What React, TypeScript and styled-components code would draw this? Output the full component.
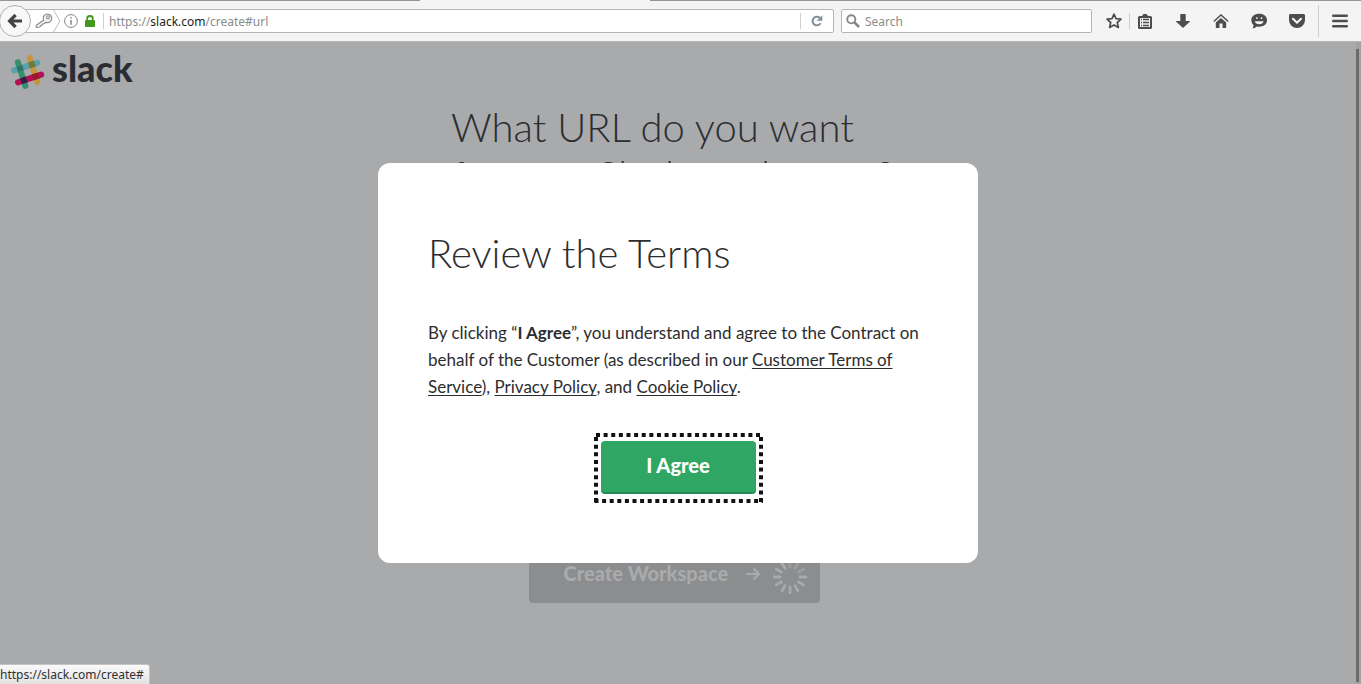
import React from "react";
import styled, { createGlobalStyle } from "styled-components";

const GlobalStyle = createGlobalStyle`
  *, *::before, *::after { box-sizing: border-box; }
  html, body, #root { height: 100%; margin: 0; }
  body { overflow: hidden; background: #a9aaab; color: #2c2d30; font-family: Lato, "Liberation Sans", sans-serif; }
`;

const uiFont = `"Noto Sans", "Open Sans", sans-serif`;

const Window = styled.div`
  display: flex;
  flex-direction: column;
  height: 100vh;
`;

const TabEdge = styled.div`
  display: flex;
  flex: none;
  height: 1px;
  background: #979598;
`;

const ActiveTab = styled.div`
  width: 230px;
  margin-left: 420px;
  background: #f4f4f4;
`;

const Toolbar = styled.header`
  display: flex;
  flex: none;
  align-items: center;
  height: 41px;
  background: #f4f4f4;
  border-bottom: 1px solid #b7b7b8;
  font-family: ${uiFont};
  font-size: 12px;
`;

const IconButton = styled.button<{ $width?: number }>`
  display: flex;
  align-items: center;
  justify-content: center;
  width: ${(p) => p.$width ?? 30}px;
  height: 24px;
  padding: 0;
  border: 0;
  background: none;
  color: #4d4d4d;
`;

const BackButton = styled.button`
  display: flex;
  flex: none;
  align-items: center;
  justify-content: center;
  z-index: 1;
  width: 32px;
  height: 32px;
  margin-left: -1px;
  padding: 0;
  border: 1px solid #b0b0b0;
  border-radius: 50%;
  background: #f8f8f8;
  color: #444;
`;

const AddressBar = styled.form`
  display: flex;
  flex: 1;
  align-items: center;
  height: 24px;
  margin-left: -6px;
  padding-left: 9px;
  border: 1px solid #b5b5b5;
  border-radius: 0 2px 2px 0;
  background: #fff;
`;

const Identity = styled.div`
  display: flex;
  align-items: center;
  height: 22px;
  padding-right: 4px;
`;

const Divider = styled.span<{ $height?: number }>`
  flex: none;
  width: 1px;
  height: ${(p) => p.$height ?? 16}px;
  background: #d0d0d0;
`;

const Address = styled.a`
  flex: 1;
  padding-left: 5px;
  color: #8b8b8b;
  text-decoration: none;
  white-space: nowrap;

  b { color: #1c1c1c; font-weight: 400; }
`;

const SearchBox = styled.label`
  display: flex;
  flex: none;
  align-items: center;
  width: 251px;
  height: 24px;
  margin: 0 7px;
  padding-left: 4px;
  border: 1px solid #b5b5b5;
  border-radius: 2px;
  background: #fff;
`;

const SearchInput = styled.input`
  flex: 1;
  min-width: 0;
  margin-left: 5px;
  padding: 0;
  border: 0;
  outline: 0;
  background: none;
  font: inherit;

  &::placeholder { color: #8b8b8b; opacity: 1; }
`;

const Actions = styled.nav`
  display: flex;
  align-items: center;
`;

const MenuArea = styled.div`
  display: flex;
  align-items: center;
  margin-left: 6px;
`;

const Viewport = styled.div`
  position: relative;
  display: flex;
  flex: 1;
  min-height: 0;
  background: #a9aaab;
`;

const Page = styled.main`
  flex: 1;
  min-width: 0;
  overflow: hidden;
`;

const Scrollbar = styled.div`
  flex: none;
  width: 5px;
  padding: 7px 1px 2px 0;
  background: #a3a3a4;
`;

const ScrollThumb = styled.div`
  width: 3px;
  height: 100%;
  background: #6b6b6c;
`;

const Brand = styled.a`
  display: flex;
  align-items: center;
  gap: 7px;
  width: max-content;
  height: 59px;
  margin-bottom: 2px;
  padding-left: 11px;
  color: #2c2d33;
  font-size: 36px;
  font-weight: 900;
  line-height: 40px;
  text-decoration: none;
`;

const WordMark = styled.span`
  padding-bottom: 8px;
`;

const Setup = styled.section`
  display: flex;
  flex-direction: column;
  align-items: center;
  justify-content: space-between;
  width: 454px;
  height: 500px;
  margin: 0 auto;
`;

const Title = styled.h1`
  margin: 0;
  color: #2c2d30;
  font-size: 40px;
  font-weight: 300;
  line-height: 48px;
`;

const CreateButton = styled.button`
  display: flex;
  align-items: center;
  width: 291px;
  height: 52px;
  margin-right: 8px;
  padding: 0 12px 0 35px;
  border: 0;
  border-radius: 4px;
  background: #8c8d8e;
  color: #a9aaab;
  font: 900 20px/24px Lato, sans-serif;
`;

const CreateLabel = styled.span`
  display: flex;
  flex: 1;
  align-items: center;
  gap: 18px;
  padding-bottom: 8px;
`;

const Overlay = styled.div`
  position: absolute;
  inset: 0 5px 0 0;
  display: flex;
  align-items: center;
  justify-content: center;
`;

const Dialog = styled.div`
  display: flex;
  flex-direction: column;
  align-items: flex-start;
  width: 600px;
  max-width: 100%;
  padding: 66px 50px 61px;
  border-radius: 12px;
  background: #fff;
`;

const DialogTitle = styled.h2`
  margin: 0 0 42px;
  font-size: 40px;
  font-weight: 300;
  line-height: 48px;
`;

const Terms = styled.p`
  margin: 0 0 33px;
  font-size: 17px;
  line-height: 27px;

  a {
    color: inherit;
    text-decoration: underline 1px;
    text-decoration-skip-ink: none;
    text-underline-offset: 2px;
  }
`;

const AgreeButton = styled.button`
  position: relative;
  align-self: center;
  width: 155px;
  height: 53px;
  margin: 8px 0;
  padding: 0 0 4px;
  border: 0;
  border-bottom: 2px solid #258a55;
  border-radius: 4px;
  outline: 0;
  background: #2fa664;
  color: #fff;
  font: 900 20px/24px Lato, sans-serif;
`;

const FocusRing = styled.svg`
  position: absolute;
  top: -8px;
  left: -7px;
`;

const StatusBar = styled.div`
  position: absolute;
  bottom: 0;
  left: 0;
  height: 20px;
  padding-right: 5px;
  border-top: 1px solid #c4c4c4;
  border-right: 1px solid #c4c4c4;
  border-radius: 0 3px 0 0;
  background: linear-gradient(#fafafa, #e2e2e2);
  color: #303030;
  font: 12px/19px ${uiFont};
`;

const BackIcon = () => (
  <svg width="16" height="16" viewBox="0 0 16 16" fill="none" stroke="currentColor" strokeWidth="3.2">
    <path d="M8.6 2 2.6 8l6 6M3 8h12" />
  </svg>
);

const KeyIcon = () => (
  <svg width="18" height="16" viewBox="0 0 18 16" fill="#f1f1ef" stroke="#8a8a8a" strokeWidth="1.1" strokeLinejoin="round">
    <path d="M8.6 7.2A4.3 4.3 0 1 1 12.2 9.6L10.4 9.4 9.4 10.6 7.8 10.8 7.4 12.2 5.9 12.4 4.9 14 1.2 14.4 1.3 12.2Z" />
    <circle cx="13" cy="4.2" r="1.4" fill="#fff" />
  </svg>
);

const Chevron = () => (
  <svg width="8" height="22" viewBox="0 0 8 22" fill="none" stroke="#bcbcbc">
    <path d="M.5 0 7 11 .5 22" />
  </svg>
);

const InfoIcon = () => (
  <svg width="14" height="14" viewBox="0 0 14 14" fill="none" stroke="#858585">
    <circle cx="7" cy="7" r="6.4" />
    <path d="M7 6v4.8M7 3v1.6" strokeWidth="1.5" />
  </svg>
);

const LockIcon = () => (
  <svg width="10" height="12" viewBox="0 0 10 12">
    <path d="M2.2 6V3.4a2.8 2.4 0 0 1 5.6 0V6" fill="none" stroke="#43971f" strokeWidth="1.8" />
    <rect y="5" width="10" height="7" rx="1" fill="#43971f" />
  </svg>
);

const ReloadIcon = () => (
  <svg width="12" height="12" viewBox="0 0 12 12">
    <path d="M9.6 8.2A4.3 4.3 0 1 1 8.8 2.8" fill="none" stroke="#82909a" strokeWidth="2.1" />
    <path d="M11.3.2V5.8H5.6Z" fill="#82909a" />
  </svg>
);

const SearchIcon = () => (
  <svg width="14" height="14" viewBox="0 0 14 14" fill="none" stroke="#868686">
    <circle cx="5.3" cy="5.3" r="4.1" strokeWidth="1.9" />
    <path d="m8.4 8.4 4.6 4.6" strokeWidth="2.6" />
  </svg>
);

const StarIcon = () => (
  <svg width="16" height="16" viewBox="0 0 16 16" fill="none" stroke="currentColor" strokeWidth="1.7" strokeLinejoin="round">
    <path d="m8 1.2 2 4.5 5 .5-3.7 3.3 1.1 4.9L8 11.9l-4.4 2.5 1.1-4.9L1 6.2l5-.5Z" />
  </svg>
);

const ListIcon = () => (
  <svg width="14" height="15" viewBox="0 0 14 15">
    <path d="M1.5 2H4L5.5 0H8.5L10 2H12.5Q14 2 14 3.5V13.5Q14 15 12.5 15H1.5Q0 15 0 13.5V3.5Q0 2 1.5 2Z" fill="currentColor" />
    <path d="M2 4h10v9H2Z" fill="#f4f4f4" />
    <path d="M3 5.5h1M5 5.5h6M3 8.5h1M5 8.5h6M3 11.5h1M5 11.5h6" stroke="currentColor" strokeWidth="1.4" />
  </svg>
);

const DownloadIcon = () => (
  <svg width="14" height="14" viewBox="0 0 14 14" fill="currentColor">
    <path d="M4.3.5q0-.5.5-.5h4.4q.5 0 .5.5V7h3.8q.8.1.3.7L7.5 13.6q-.5.5-1 0L.2 7.7Q-.3 7.1.5 7h3.8Z" />
  </svg>
);

const HomeIcon = () => (
  <svg width="16" height="14" viewBox="0 0 16 14">
    <path d="M.8 7.4 8 .9l7.2 6.5" fill="none" stroke="currentColor" strokeWidth="1.4" />
    <path d="M2.8 8.6 8 4l5.2 4.6V13.2q0 .8-.8.8H9.5V9.5h-3V14H3.6q-.8 0-.8-.8Z" fill="currentColor" />
  </svg>
);

const ChatIcon = () => (
  <svg width="16" height="16" viewBox="0 0 16 16">
    <path d="M8.2.8C12.8.8 16 3.3 16 7.3s-3.2 6.4-7.8 6.4q-1.3 0-2.6-.3Q4 15.3 1.5 15.3 2.7 13.8 2.5 12 .3 10.2.3 7.3C.3 3.3 3.7.8 8.2.8Z" fill="currentColor" />
    <path d="M5.2 4.2h1.4v1.9H5.2ZM9.8 4.2h1.4v1.9H9.8ZM3.8 8.2h8.8q-.8 3-4.4 3T3.8 8.2Z" fill="#f4f4f4" />
  </svg>
);

const PocketIcon = () => (
  <svg width="16" height="14" viewBox="0 0 16 14">
    <path d="M1.4 0h13.2Q16 0 16 1.4V6a8 8 0 0 1-16 0V1.4Q0 0 1.4 0Z" fill="currentColor" />
    <path d="m4 4.8 4 3.9 4-3.9" fill="none" stroke="#f4f4f4" strokeWidth="2.1" strokeLinecap="round" strokeLinejoin="round" />
  </svg>
);

const MenuIcon = () => (
  <svg width="16" height="14" viewBox="0 0 16 14" stroke="currentColor" strokeWidth="2.6" strokeLinecap="round">
    <path d="M1.3 1.8h13.4M1.3 7h13.4M1.3 12.2h13.4" />
  </svg>
);

const SlackHash = () => (
  <svg width="34" height="36" viewBox="0 0 34 36" fill="none" strokeWidth="6" strokeLinecap="round">
    <path d="M18.8 4.2 26.2 27.8" stroke="#c6953d" />
    <path d="M6.9 8.4 14.4 32" stroke="#35906d" />
    <path d="M3.1 16.4 26.2 8.8" stroke="#5ba1aa" />
    <path d="m6.2 15.4 5.7-1.9" stroke="#2b7568" strokeLinecap="butt" />
    <path d="m18 11.5 5.7-1.9" stroke="#6d7a38" strokeLinecap="butt" />
    <path d="M7 28.3 30.2 20.7" stroke="#b51053" />
    <path d="m9.9 27.3 5.7-1.9" stroke="#30204a" strokeLinecap="butt" />
    <path d="m21.8 23.4 5.7-1.9" stroke="#951c2b" strokeLinecap="butt" />
  </svg>
);

const ArrowIcon = () => (
  <svg width="14" height="14" viewBox="0 0 14 14" fill="none" stroke="currentColor" strokeWidth="2.2" strokeLinecap="round" strokeLinejoin="round">
    <path d="M1 8h12M8 3l5 5-5 5" />
  </svg>
);

const Spinner = () => (
  <svg width="36" height="36" viewBox="-18 -18 36 36" stroke="currentColor" strokeWidth="2.8" strokeLinecap="round">
    {Array.from({ length: 12 }, (_, i) => (
      <path key={i} d="M0 10V15.8" transform={`rotate(${i * 30})`} opacity={i > 5 && i < 9 ? 0.6 : 1} />
    ))}
  </svg>
);

const DottedRing = () => (
  <FocusRing width="169" height="70" viewBox="0 0 169 70" fill="none" stroke="#111" strokeWidth="4" aria-hidden="true">
    <path d="M2 2H166" strokeDasharray="4 3.62" />
    <path d="M.5 68H169" strokeDasharray="4 3.6" />
    <path d="M2 4V70" strokeDasharray="4 3.63" />
    <path d="M167 4V70" strokeDasharray="4 3.63" />
  </FocusRing>
);

export default function App() {
  return (
    <Window>
      <GlobalStyle />
      <TabEdge><ActiveTab /></TabEdge>
      <Toolbar>
        <BackButton type="button" aria-label="Back"><BackIcon /></BackButton>
        <AddressBar>
          <Identity>
            <IconButton type="button" $width={18} aria-label="Saved login"><KeyIcon /></IconButton>
            <Chevron />
            <IconButton type="button" $width={20} aria-label="Site information"><InfoIcon /></IconButton>
            <IconButton type="button" $width={18} aria-label="Secure connection"><LockIcon /></IconButton>
          </Identity>
          <Divider />
          <Address href="https://slack.com/create#url">https://<b>slack.com</b>/create#url</Address>
          <Divider />
          <IconButton type="button" $width={32} aria-label="Reload"><ReloadIcon /></IconButton>
        </AddressBar>
        <SearchBox>
          <SearchIcon />
          <SearchInput type="text" placeholder="Search" aria-label="Search" />
        </SearchBox>
        <Actions>
          <IconButton type="button" aria-label="Bookmark"><StarIcon /></IconButton>
          <Divider />
          <IconButton type="button" aria-label="Bookmarks list"><ListIcon /></IconButton>
          <IconButton type="button" $width={46} aria-label="Downloads"><DownloadIcon /></IconButton>
          <IconButton type="button" aria-label="Home"><HomeIcon /></IconButton>
          <IconButton type="button" $width={46} aria-label="Chat"><ChatIcon /></IconButton>
          <IconButton type="button" aria-label="Pocket"><PocketIcon /></IconButton>
          <MenuArea>
            <Divider $height={32} />
            <IconButton type="button" $width={42} aria-label="Menu"><MenuIcon /></IconButton>
          </MenuArea>
        </Actions>
      </Toolbar>
      <Viewport>
        <Page>
          <Brand href="#"><SlackHash /><WordMark>slack</WordMark></Brand>
          <Setup>
            <Title>What URL do you want for your Slack workspace?</Title>
            <CreateButton type="button">
              <CreateLabel>Create Workspace<ArrowIcon /></CreateLabel>
              <Spinner />
            </CreateButton>
          </Setup>
        </Page>
        <Scrollbar><ScrollThumb /></Scrollbar>
        <Overlay>
          <Dialog role="dialog" aria-modal="true" aria-labelledby="terms-title">
            <DialogTitle id="terms-title">Review the Terms</DialogTitle>
            <Terms>
              By clicking “<b>I Agree</b>”, you understand and agree to the Contract on behalf of the Customer (as
              described in our <a href="#customer-terms">Customer Terms of Service</a>), <a href="#privacy">Privacy Policy</a>, and{" "}
              <a href="#cookies">Cookie Policy</a>.
            </Terms>
            <AgreeButton type="button">I Agree<DottedRing /></AgreeButton>
          </Dialog>
        </Overlay>
        <StatusBar>https://slack.com/create#</StatusBar>
      </Viewport>
    </Window>
  );
}
